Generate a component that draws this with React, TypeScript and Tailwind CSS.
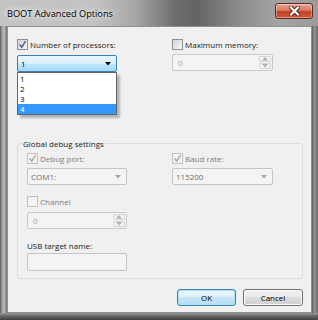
import React from "react";

function Check({ checked = false, disabled = false }: { checked?: boolean; disabled?: boolean }) {
  return (
    <span
      className={`flex h-[11px] w-[11px] shrink-0 items-center justify-center border ${
        disabled
          ? "border-[#c2c2c2] bg-[#f4f4f4]"
          : "border-[#8e8f8f] bg-[linear-gradient(135deg,#cfd3d9,#f7f7f7)]"
      }`}
    >
      {checked && (
        <svg width="9" height="9" viewBox="0 0 9 9">
          <path
            d="M1.6 4.4L3.7 7.2L7.6 1.2"
            fill="none"
            stroke={disabled ? "#a8a8a8" : "#4b5f8d"}
            strokeWidth="1.5"
          />
        </svg>
      )}
    </span>
  );
}

function Arrow({ color, up = false }: { color: string; up?: boolean }) {
  return (
    <svg width="6" height="4" viewBox="0 0 6 4">
      <path d={up ? "M0 3.5H6L3 0Z" : "M0 0H6L3 3.5Z"} fill={color} />
    </svg>
  );
}

function Spin() {
  return (
    <div className="flex h-[17px] w-full items-center rounded-[2px] border border-[#c7c9cc] bg-[#f4f4f4] pl-[5px] pr-[1px]">
      <span className="flex-1 text-[#a0a0a0]">0</span>
      <div className="flex h-full w-[12px] flex-col gap-[1px] py-[1px]">
        <span className="flex flex-1 items-center justify-center rounded-[1px] border border-[#d6d6d6] bg-[#f2f2f2]">
          <Arrow color="#b0b0b0" up />
        </span>
        <span className="flex flex-1 items-center justify-center rounded-[1px] border border-[#d6d6d6] bg-[#f2f2f2]">
          <Arrow color="#b0b0b0" />
        </span>
      </div>
    </div>
  );
}

function DisabledCombo({ value }: { value: string }) {
  return (
    <div className="flex h-[17px] w-full items-center justify-between rounded-[2px] border border-[#c3c5c8] bg-[#f4f4f4] pl-[3px] pr-[5px] text-[#6d6d6d]">
      <span>{value}</span>
      <Arrow color="#a6a6a6" />
    </div>
  );
}

export default function App() {
  return (
    <div className="flex h-[320px] w-[318px] flex-col overflow-hidden bg-[#7a7a7a] font-['Open_Sans',sans-serif] text-[8px] leading-[11px] whitespace-nowrap text-[#1a1a1a]">
      {/* title bar */}
      <div className="flex h-[26px] items-start justify-between bg-[linear-gradient(90deg,#c4c4c4_0%,#c2c2c2_30%,#a8a8a8_42%,#6e6e6e_55%,#646464_62%,#8c8c8c_75%,#a4a4a4_88%,#9a9a9a_100%)]">
        <span className="ml-[7px] mt-[8px] text-[9.2px] leading-[12px] text-black [text-shadow:0_0_5px_#fff,0_0_8px_#fff]">
          BOOT Advanced Options
        </span>
        <div className="mr-[5px] mt-[3px] flex h-[16px] w-[38px] items-center justify-center rounded-[3px] border border-[#5a2a22] bg-[linear-gradient(#e9a597_0%,#d77a65_45%,#c1411f_55%,#cf5d3f_100%)] shadow-[inset_0_0_0_1px_rgba(255,255,255,0.35)]">
          <svg width="11" height="10" viewBox="0 0 11 10">
            <path d="M2 1.5L9 8.5M9 1.5L2 8.5" stroke="#4a1f18" strokeWidth="4" strokeLinecap="square" />
            <path d="M2 1.5L9 8.5M9 1.5L2 8.5" stroke="#ffffff" strokeWidth="2.2" strokeLinecap="square" />
          </svg>
        </div>
      </div>

      <div className="flex flex-1">
        <div className="w-[7px] bg-[linear-gradient(90deg,#5e5e5e_0%,#a9a9a9_35%,#b5b5b5_65%,#6f6f6f_100%)]" />

        {/* client area */}
        <div className="flex flex-1 flex-col bg-[#f0f0f0] pl-[10px] pr-[9px] shadow-[inset_0_0_0_1px_#8f8f8f]">
          <div className="mt-[13px] flex">
            <div className="flex w-[100px] flex-col">
              <label className="flex h-[11px] items-center gap-[2px]">
                <Check checked />
                <span>Number of processors:</span>
              </label>
              <div className="relative mt-[5px]">
                <div className="flex h-[17px] items-center justify-between rounded-[2px] border border-[#3c7fb1] bg-[linear-gradient(#eaf6fd_0%,#d9f0fc_50%,#bee6fd_50%,#a7d9f5_100%)] pl-[3px] pr-[5px] text-black">
                  <span>1</span>
                  <Arrow color="#000000" />
                </div>
                <div className="absolute left-0 top-[17px] z-10 flex w-[100px] flex-col border border-[#646464] bg-white pt-[1px] text-black shadow-[3px_3px_2px_rgba(0,0,0,0.25)]">
                  <span className="h-[10px] pl-[2px] leading-[10px]">1</span>
                  <span className="h-[10px] pl-[2px] leading-[10px]">2</span>
                  <span className="h-[10px] pl-[2px] leading-[10px]">3</span>
                  <span className="h-[10px] bg-[#3399ff] pl-[2px] leading-[10px] text-white">4</span>
                </div>
              </div>
            </div>

            <div className="ml-[55px] flex w-[101px] flex-col">
              <label className="flex h-[11px] items-center gap-[2px]">
                <Check />
                <span>Maximum memory:</span>
              </label>
              <div className="mt-[4px]">
                <Spin />
              </div>
            </div>
          </div>

          {/* group box */}
          <fieldset className="mt-[66px] h-[141px] rounded-[3px] border border-[#d5dfe5] pb-[6px] pl-[9px]">
            <legend className="-ml-[5px] px-[1px] leading-[11px]">Global debug settings</legend>
            <div className="mt-[4px] flex">
              <div className="flex w-[100px] flex-col">
                <label className="flex h-[11px] items-center gap-[2px] text-[#7d7d7d]">
                  <Check checked disabled />
                  <span>Debug port:</span>
                </label>
                <div className="mt-[4px]">
                  <DisabledCombo value="COM1:" />
                </div>
                <label className="mt-[11px] flex h-[11px] items-center gap-[2px] text-[#7d7d7d]">
                  <Check disabled />
                  <span>Channel</span>
                </label>
                <div className="mt-[5px]">
                  <Spin />
                </div>
                <span className="mt-[11px] h-[11px]">USB target name:</span>
                <div className="mt-[2px] h-[18px] rounded-[2px] border border-[#c3c5c8] bg-[#f4f4f4]" />
              </div>
              <div className="ml-[45px] flex w-[101px] flex-col">
                <label className="flex h-[11px] items-center gap-[2px] text-[#7d7d7d]">
                  <Check checked disabled />
                  <span>Baud rate:</span>
                </label>
                <div className="mt-[4px]">
                  <DisabledCombo value="115200" />
                </div>
              </div>
            </div>
          </fieldset>

          <div className="mt-[10px] flex justify-end gap-[7px]">
            <button className="h-[17px] w-[59px] rounded-[3px] border border-[#3c7fb1] bg-[linear-gradient(#ecf7fd_0%,#dcf1fb_50%,#c6e6f7_50%,#b6ddf2_100%)] text-black shadow-[inset_0_0_0_1px_#aee2fb]">
              OK
            </button>
            <button className="h-[17px] w-[60px] rounded-[3px] border border-[#707070] bg-[linear-gradient(#f2f2f2_0%,#ebebeb_50%,#dddddd_50%,#cfcfcf_100%)] text-black shadow-[inset_0_0_0_1px_#fbfbfb]">
              Cancel
            </button>
          </div>
        </div>

        <div className="w-[6px] bg-[linear-gradient(90deg,#5d5d5d_0%,#8f959b_40%,#6b6b6b_100%)]" />
      </div>
      <div className="h-[7px] bg-[linear-gradient(#9a9a9a_0%,#6a6a6a_40%,#3f3f3f_100%)]" />
    </div>
  );
}
